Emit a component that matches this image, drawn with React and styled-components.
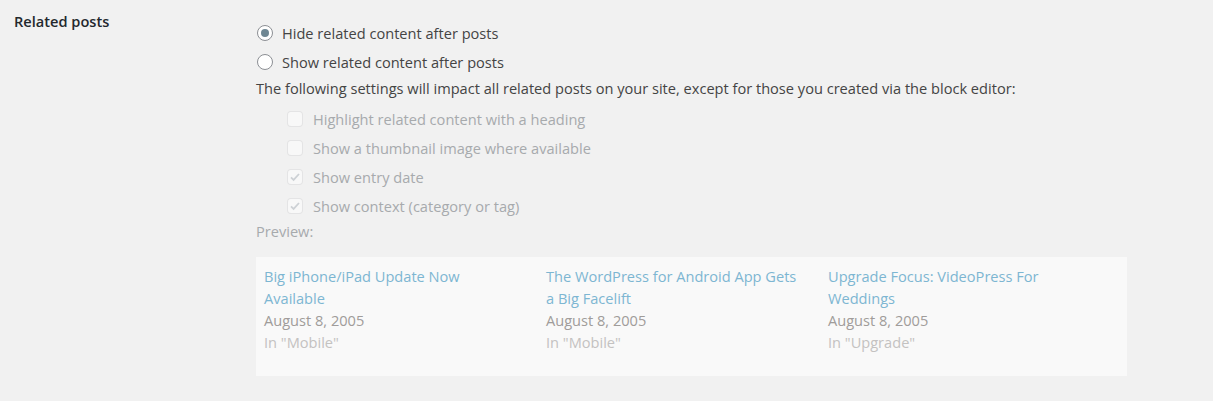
import React from "react";
import styled, { createGlobalStyle } from "styled-components";

const GlobalStyle = createGlobalStyle`
  body {
    margin: 0;
    background: #f1f1f1;
    font-family: "Open Sans", "Noto Sans", sans-serif;
    font-size: 14.6px;
    color: #444;
  }
`;

const posts = [
  { title: "Big iPhone/iPad Update Now Available", date: "August 8, 2005", context: 'In "Mobile"' },
  { title: "The WordPress for Android App Gets a Big Facelift", date: "August 8, 2005", context: 'In "Mobile"' },
  { title: "Upgrade Focus: VideoPress For Weddings", date: "August 8, 2005", context: 'In "Upgrade"' },
];

const options = [
  { label: "Highlight related content with a heading", checked: false },
  { label: "Show a thumbnail image where available", checked: false },
  { label: "Show entry date", checked: true },
  { label: "Show context (category or tag)", checked: true },
];

const Page = styled.div`
  display: flex;
  padding: 11px 0 0 14px;
  min-height: 390px;
`;

const Label = styled.div`
  width: 242px;
  flex-shrink: 0;
  font-weight: 600;
  color: #23282d;
  line-height: 20px;
`;

const Content = styled.div`
  padding-top: 7px;
  width: 871px;
`;

const RadioRow = styled.label`
  display: flex;
  align-items: center;
  height: 29px;
  color: #444;
`;

const Radio = styled.span`
  box-sizing: border-box;
  width: 16px;
  height: 16px;
  margin: 0 9px 0 1px;
  border-radius: 50%;
  border: 1px solid #8c8f94;
  background: #fff;
  display: flex;
  align-items: center;
  justify-content: center;
  &::after {
    content: "";
    display: ${({ checked }) => (checked ? "block" : "none")};
    width: 8px;
    height: 8px;
    border-radius: 50%;
    background: #6f8793;
  }
`;

const Description = styled.p`
  margin: 0 0 4px;
  line-height: 24px;
  color: #444;
`;

const CheckRow = styled.label`
  display: flex;
  align-items: center;
  height: 29px;
  padding-left: 31px;
  color: #a7aaad;
`;

const Box = styled.span`
  box-sizing: border-box;
  width: 16px;
  height: 16px;
  margin-right: 10px;
  border-radius: 4px;
  border: 1px solid rgba(220, 220, 222, 0.75);
  background: rgba(255, 255, 255, 0.5);
  display: flex;
  align-items: center;
  justify-content: center;
`;

const PreviewLabel = styled.p`
  margin: -1px 0 0;
  line-height: 24px;
  color: #a7aaad;
`;

const PreviewBox = styled.div`
  margin-top: 14px;
  height: 119px;
  box-sizing: border-box;
  background: #f9f9f9;
  padding: 8px 8px 0;
  display: grid;
  grid-template-columns: repeat(3, 256px);
  column-gap: 26px;
  align-content: start;
`;

const Post = styled.div`
  line-height: 22px;
`;

const Title = styled.div`
  color: #7db6d2;
`;

const PostDate = styled.div`
  color: #a09c9a;
`;

const Context = styled.div`
  color: #c4c2c1;
`;

const Check = () => (
  <svg width="12" height="12" viewBox="0 0 12 12">
    <path d="M2 6.3l2.6 2.6L10 3" fill="none" stroke="#cdd1d5" strokeWidth="1.8" />
  </svg>
);

export default function App() {
  return (
    <>
      <GlobalStyle />
      <Page>
        <Label>Related posts</Label>
        <Content>
          <RadioRow>
            <Radio checked />
            Hide related content after posts
          </RadioRow>
          <RadioRow>
            <Radio />
            Show related content after posts
          </RadioRow>
          <Description>
            The following settings will impact all related posts on your site, except for those you created via the block editor:
          </Description>
          {options.map((o) => (
            <CheckRow key={o.label}>
              <Box>{o.checked && <Check />}</Box>
              {o.label}
            </CheckRow>
          ))}
          <PreviewLabel>Preview:</PreviewLabel>
          <PreviewBox>
            {posts.map((p) => (
              <Post key={p.title}>
                <Title>{p.title}</Title>
                <PostDate>{p.date}</PostDate>
                <Context>{p.context}</Context>
              </Post>
            ))}
          </PreviewBox>
        </Content>
      </Page>
    </>
  );
}
